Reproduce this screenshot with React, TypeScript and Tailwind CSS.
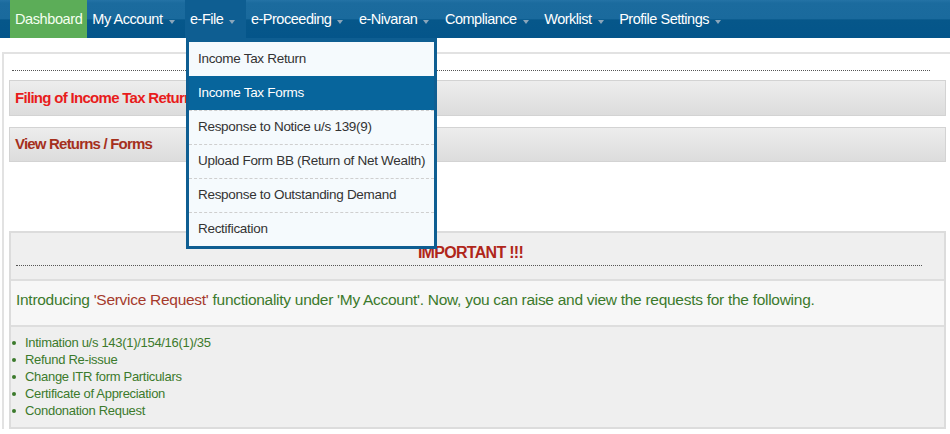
import React from "react";

const Caret = () => (
  <svg width="6" height="4" viewBox="0 0 6 4" className="ml-[6px] mt-[4px]">
    <path d="M0 0 L6 0 L3 4 Z" fill="#8aa6bb" />
  </svg>
);

const navItems = ["My Account", "e-File", "e-Proceeding", "e-Nivaran", "Compliance", "Worklist", "Profile Settings"];

const dropItems = [
  "Income Tax Return",
  "Income Tax Forms",
  "Response to Notice u/s 139(9)",
  "Upload Form BB (Return of Net Wealth)",
  "Response to Outstanding Demand",
  "Rectification",
];

export default function App() {
  return (
    <div
      className="relative w-[950px] h-[434px] overflow-hidden bg-white"
      style={{ fontFamily: '"Liberation Sans", Arial, sans-serif' }}
    >
      {/* nav */}
      <div className="flex h-[38px] pl-[10px] bg-[linear-gradient(#2473a6_0%,#1b6b9e_8%,#1a6a9d_50%,#06578a_52%,#04558a_100%)] text-white text-[14.5px] tracking-[-0.4px] whitespace-nowrap">
        <div className="flex items-center pt-[1px] px-[5px] bg-[#5cad58] text-[#f4fff0]">Dashboard</div>
        {navItems.map((n) => (
          <div
            key={n}
            className={
              "flex items-center pt-[1px] pl-[5px] pr-[10.5px] tracking-[-0.48px] " + (n === "e-File" ? "bg-[#0e5e92]" : "")
            }
          >
            <span>{n}</span>
            <Caret />
          </div>
        ))}
      </div>

      {/* content */}
      <div className="mt-[14px] ml-[2px] border-t-2 border-l-2 border-[#e2e2e2] pl-[5px] pt-[16px]">
        <div className="ml-[3px] w-[918px] border-t border-dotted border-[#555]" />
        <div className="mt-[9px] w-[937px] h-[36px] flex items-center pl-[5px] border border-[#d3d3d3] bg-[linear-gradient(#ededed,#dcdcdc)] font-bold text-[15px] tracking-[-0.7px] text-[#e81c1c]">
          Filing of Income Tax Return
        </div>
        <div className="mt-[11px] w-[937px] h-[35px] flex items-center pl-[5px] border border-[#d3d3d3] bg-[linear-gradient(#ededed,#dcdcdc)] font-bold text-[15px] tracking-[-0.8px] text-[#a5301d]">
          View Returns / Forms
        </div>

        <div className="mt-[69px] w-[937px] h-[198px] border-2 border-[#dcdcdc] bg-[#efefef] flex flex-col">
          <div className="h-[46px] px-[5px] pt-[10px]">
            <div className="text-center pr-[14px] font-bold text-[16px] tracking-[-0.7px] text-[#b0261a] leading-[20px]">IMPORTANT !!!</div>
            <div className="mt-[2px] w-[906px] border-t border-dotted border-[#555]" />
          </div>
          <div className="h-[48px] border-y-2 border-[#dedede] bg-[#f7f7f7] flex items-start pt-[7px] pl-[5px] text-[15.5px] tracking-[-0.28px] text-[#3c7a2c] whitespace-nowrap">
            <span>
              Introducing <span className="text-[#a53a2c]">'Service Request'</span> functionality under 'My Account'. Now, you can raise and view the requests for the following.
            </span>
          </div>
          <ul className="pt-[7px] text-[13px] tracking-[-0.3px] leading-[17px] text-[#3c7a2c]">
            {[
              "Intimation u/s 143(1)/154/16(1)/35",
              "Refund Re-issue",
              "Change ITR form Particulars",
              "Certificate of Appreciation",
              "Condonation Request",
            ].map((t) => (
              <li key={t} className="flex items-center">
                <span className="w-[4px] h-[4px] rounded-full bg-[#3c7a2c] ml-[1px] mr-[9px]" />
                {t}
              </li>
            ))}
          </ul>
        </div>
      </div>

      {/* dropdown */}
      <div className="absolute left-[186px] top-[38px] w-[251px] border-[3px] border-t-[4px] border-[#0e5e92] bg-[#0e5e92]">
        {dropItems.map((d, i) => (
          <div
            key={d}
            className={
              "h-[34px] flex items-center pl-[9px] text-[13.5px] tracking-[-0.3px] whitespace-nowrap " +
              (i === 1
                ? "bg-[#07659c] text-white"
                : "bg-[#f5fafd] text-[#333] " + (i > 1 ? "border-t border-dashed border-[#cfcfcf]" : ""))
            }
          >
            {d}
          </div>
        ))}
      </div>
    </div>
  );
}
